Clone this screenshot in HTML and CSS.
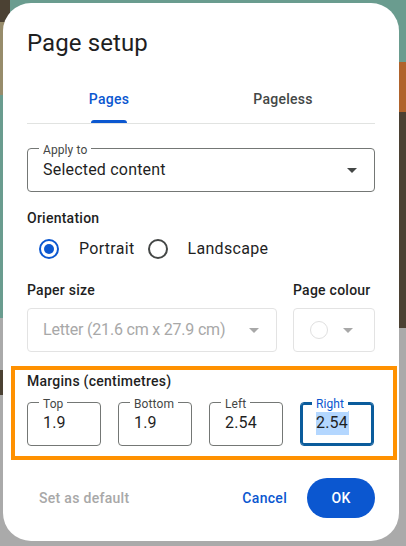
FILE: index.html
```html
<!DOCTYPE html>
<html lang="en">
<head>
<meta charset="utf-8">
<title>Page setup</title>
<link rel="stylesheet" href="styles.css">
</head>
<body>
<div class="dialog">
  <h1 class="title">Page setup</h1>

  <div class="tabs">
    <div class="tab-list">
      <div class="tab active"><span class="tab-label">Pages</span></div>
      <div class="tab"><span class="tab-label">Pageless</span></div>
    </div>
  </div>

  <div class="field field-apply">
    <span class="field-label">Apply to</span>
    <span class="field-value">Selected content</span>
    <span class="caret"></span>
  </div>

  <div class="section-label orientation-label">Orientation</div>
  <div class="radio-row">
    <div class="radio checked"><span class="radio-circle"></span><span class="radio-text">Portrait</span></div>
    <div class="radio"><span class="radio-circle"></span><span class="radio-text">Landscape</span></div>
  </div>

  <div class="paper-row">
    <div class="paper-col">
      <div class="section-label">Paper size</div>
      <div class="select disabled">
        <span class="field-value paper-value">Letter (21.6 cm x 27.9 cm)</span>
        <span class="caret"></span>
      </div>
    </div>
    <div class="colour-col">
      <div class="section-label">Page colour</div>
      <div class="select colour-select disabled">
        <span class="swatch"></span>
        <span class="caret"></span>
      </div>
    </div>
  </div>

  <div class="margins">
    <div class="section-label">Margins (centimetres)</div>
    <div class="margin-fields">
      <div class="field margin-field"><span class="field-label">Top</span><span class="field-value">1.9</span></div>
      <div class="field margin-field"><span class="field-label">Bottom</span><span class="field-value">1.9</span></div>
      <div class="field margin-field"><span class="field-label">Left</span><span class="field-value">2.54</span></div>
      <div class="field margin-field focused"><span class="field-label">Right</span><span class="field-value"><span class="selected-text">2.54</span></span></div>
    </div>
  </div>

  <div class="actions">
    <button class="btn btn-text disabled-btn">Set as default</button>
    <div class="actions-right">
      <button class="btn btn-text">Cancel</button>
      <button class="btn btn-filled">OK</button>
    </div>
  </div>

  <div class="highlight"></div>
</div>
</body>
</html>
```

FILE: styles.css
```css
html, body {
  margin: 0;
  padding: 0;
}

body {
  width: 406px;
  height: 546px;
  overflow: hidden;
  font-family: Roboto, "Liberation Sans", sans-serif;
  background:
    linear-gradient(#4b4133, #4b4133) right 0 top 112px / 10px 216px no-repeat,
    linear-gradient(#b0632c, #b0632c) right 0 top 62px / 10px 50px no-repeat,
    linear-gradient(#4b4133 0 22px, #978c6b 22px 95px, #6a9c8f 95px 318px, #aaaaaa 318px 370px, #4b4133 370px 395px, #aaaaaa 395px) left 0 top 0 / 10px 546px no-repeat,
    linear-gradient(#6a9c8f 0 327px, #aaaaaa 327px);
}

.dialog {
  position: relative;
  box-sizing: border-box;
  width: 396px;
  height: 538px;
  margin: 3px 0 0 3px;
  padding: 24px 24px 23px;
  background: #ffffff;
  border-radius: 28px;
  color: #1f1f1f;
}

.title {
  margin: 0;
  font-size: 24px;
  line-height: 32px;
  font-weight: 400;
  letter-spacing: 0.1px;
  color: #1f1f1f;
}

/* Tabs */
.tabs {
  margin-top: 16px;
  border-bottom: 1px solid #e1e3e1;
}

.tab-list {
  display: grid;
  grid-template-columns: 1fr 1fr;
  height: 48px;
  margin: 0 5px 0 -5px;
}

.tab {
  display: flex;
  justify-content: center;
  font-size: 14px;
  line-height: 20px;
  font-weight: 500;
  letter-spacing: 0.25px;
  color: #444746;
}

.tab-label {
  position: relative;
  display: flex;
  align-items: center;
  height: 100%;
}

.tab.active {
  color: #0b57d0;
}

.tab.active .tab-label::after {
  content: "";
  position: absolute;
  left: 2px;
  right: 2px;
  bottom: 0;
  height: 3px;
  border-radius: 3px 3px 0 0;
  background: #0b57d0;
}

/* Outlined fields */
.field,
.select {
  position: relative;
  box-sizing: border-box;
  height: 44px;
  display: flex;
  align-items: center;
  border: 1px solid #747775;
  border-radius: 4px;
}

.field-apply {
  margin-top: 24px;
  padding: 0 17px 0 15px;
  justify-content: space-between;
}

.field-label {
  position: absolute;
  top: -7px;
  left: 11px;
  padding: 0 4px;
  background: #ffffff;
  font-size: 12px;
  line-height: 16px;
  letter-spacing: 0.1px;
  color: #444746;
}

.field-value {
  font-size: 16px;
  line-height: 24px;
  letter-spacing: 0.2px;
  color: #1f1f1f;
  white-space: nowrap;
}

.paper-value {
  letter-spacing: -0.2px;
}

.caret {
  width: 0;
  height: 0;
  border-left: 5px solid transparent;
  border-right: 5px solid transparent;
  border-top: 5px solid #444746;
}

.section-label {
  font-size: 14px;
  line-height: 20px;
  font-weight: 500;
  letter-spacing: 0.25px;
  color: #1f1f1f;
  white-space: nowrap;
}

.orientation-label {
  margin-top: 16px;
}

/* Radios */
.radio-row {
  margin-top: 1px;
  height: 40px;
  display: flex;
  align-items: center;
  gap: 13px;
  padding-left: 12px;
}

.radio {
  display: flex;
  align-items: center;
  gap: 20px;
}

.radio-circle {
  position: relative;
  box-sizing: border-box;
  width: 20px;
  height: 20px;
  border: 2px solid #444746;
  border-radius: 50%;
}

.radio.checked .radio-circle {
  border-color: #0b57d0;
}

.radio.checked .radio-circle::after {
  content: "";
  position: absolute;
  left: 3px;
  top: 3px;
  width: 10px;
  height: 10px;
  border-radius: 50%;
  background: #0b57d0;
}

.radio-text {
  font-size: 16px;
  line-height: 24px;
  letter-spacing: 0.3px;
  color: #1f1f1f;
}

/* Paper row */
.paper-row {
  margin-top: 11px;
  display: flex;
  gap: 16px;
}

.paper-col {
  flex: 1;
}

.colour-col {
  width: 82px;
}

.select {
  margin-top: 8px;
  padding: 0 17px 0 15px;
  justify-content: space-between;
}

.select.disabled {
  border-color: #e3e3e3;
}

.select.disabled .field-value {
  color: #a8a8a8;
}

.select.disabled .caret {
  border-top-color: #a8a8a8;
}

.colour-select {
  justify-content: flex-start;
  padding-left: 16px;
  gap: 15px;
}

.swatch {
  box-sizing: border-box;
  width: 18px;
  height: 18px;
  border: 1px solid #e0e0e0;
  border-radius: 50%;
}

/* Margins */
.margins .section-label {
  margin-top: 19px;
}

.margin-fields {
  margin-top: 11px;
  display: flex;
  gap: 17px;
}

.margin-field {
  width: 74px;
  padding: 0 0 2px 15px;
}

.margin-field.focused {
  border-color: #0b5c9c;
  box-shadow: inset 0 0 0 2px #0b5c9c;
}

.margin-field.focused .field-label {
  color: #0b57d0;
}

.selected-text {
  display: inline-block;
  line-height: 24px;
  background: #b4d7ff;
  padding-right: 1px;
}

/* Actions */
.actions {
  margin-top: 32px;
  display: flex;
  align-items: center;
  justify-content: space-between;
}

.actions-right {
  display: flex;
  align-items: center;
  gap: 8px;
}

.btn {
  height: 40px;
  border: 0;
  margin: 0;
  padding: 0 12px;
  background: transparent;
  font-family: Roboto, "Liberation Sans", sans-serif;
  font-size: 14px;
  line-height: 20px;
  font-weight: 500;
  letter-spacing: 0.3px;
  border-radius: 20px;
  color: #0b57d0;
}

.disabled-btn {
  color: #a8a8a8;
}

.btn-filled {
  width: 68px;
  background: #0b57d0;
  color: #ffffff;
}

/* Annotation overlay */
.highlight {
  position: absolute;
  left: 8px;
  top: 363px;
  width: 386px;
  height: 94px;
  box-sizing: border-box;
  border: 4px solid #ff9100;
  pointer-events: none;
}
```
